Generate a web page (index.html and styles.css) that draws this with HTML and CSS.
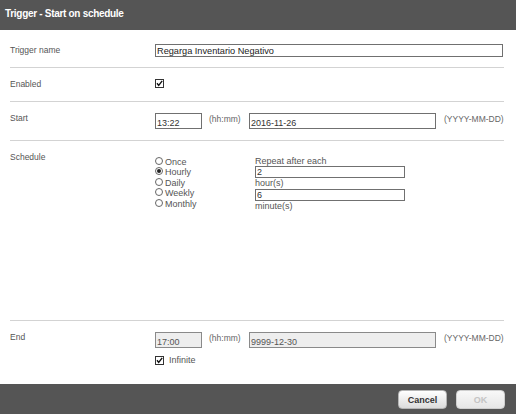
FILE: index.html
```html
<!DOCTYPE html>
<html>
<head>
<meta charset="utf-8">
<title>Trigger - Start on schedule</title>
<link rel="stylesheet" href="styles.css">
</head>
<body>
<div class="dialog">
  <div class="header">Trigger - Start on schedule</div>
  <div class="body">
    <div class="row row-name">
      <div class="label">Trigger name</div>
      <div class="content">
        <input class="field field-name" type="text" value="Regarga Inventario Negativo">
      </div>
    </div>
    <div class="row row-enabled">
      <div class="label">Enabled</div>
      <div class="content">
        <span class="check"><svg width="9" height="9" viewBox="0 0 9 9"><rect x="0.5" y="0.5" width="8" height="8" fill="#fff" stroke="#333"/><path d="M2 4.3 L3.7 6.4 L7.2 1.9" fill="none" stroke="#111" stroke-width="1.4"/></svg></span>
      </div>
    </div>
    <div class="row row-start">
      <div class="label">Start</div>
      <div class="content datetime">
        <input class="field field-dt" type="text" value="13:22">
        <span class="hint hint-time">(hh:mm)</span>
        <input class="field field-dt" type="text" value="2016-11-26">
        <span class="hint hint-date">(YYYY-MM-DD)</span>
      </div>
    </div>
    <div class="row row-schedule">
      <div class="label">Schedule</div>
      <div class="content schedule">
        <div class="radios">
          <div class="radio"><span class="dot"></span>Once</div>
          <div class="radio"><span class="dot on"></span>Hourly</div>
          <div class="radio"><span class="dot"></span>Daily</div>
          <div class="radio"><span class="dot"></span>Weekly</div>
          <div class="radio"><span class="dot"></span>Monthly</div>
        </div>
        <div class="repeat">
          <div class="rtext rtext-first">Repeat after each</div>
          <input class="field field-rep" type="text" value="2">
          <div class="rtext">hour(s)</div>
          <input class="field field-rep" type="text" value="6">
          <div class="rtext">minute(s)</div>
        </div>
      </div>
    </div>
    <div class="row row-end">
      <div class="label">End</div>
      <div class="content">
        <div class="datetime">
          <input class="field field-dt disabled" type="text" value="17:00">
          <span class="hint hint-time">(hh:mm)</span>
          <input class="field field-dt disabled" type="text" value="9999-12-30">
          <span class="hint hint-date">(YYYY-MM-DD)</span>
        </div>
        <div class="infinite">
          <span class="check"><svg width="9" height="9" viewBox="0 0 9 9"><rect x="0.5" y="0.5" width="8" height="8" fill="#fff" stroke="#333"/><path d="M2 4.3 L3.7 6.4 L7.2 1.9" fill="none" stroke="#111" stroke-width="1.4"/></svg></span>
          <span class="inf-text">Infinite</span>
        </div>
      </div>
    </div>
  </div>
  <div class="footer">
    <button class="btn btn-cancel">Cancel</button>
    <button class="btn btn-ok" disabled>OK</button>
  </div>
</div>
</body>
</html>
```
FILE: styles.css
```css
html, body {
  margin: 0;
  padding: 0;
  background: #fff;
}
body {
  font-family: "Liberation Sans", Arial, sans-serif;
  font-size: 9px;
  color: #555;
}
.dialog {
  width: 516px;
  height: 414px;
  display: flex;
  flex-direction: column;
  overflow: hidden;
}
.header {
  height: 30px;
  box-sizing: border-box;
  background: #555555;
  color: #fff;
  font-weight: bold;
  font-size: 10px;
  line-height: 28px;
  padding-left: 5px;
  letter-spacing: -0.3px;
}
.body {
  flex: 1;
  display: flex;
  flex-direction: column;
}
.row {
  display: flex;
  align-items: flex-start;
  box-sizing: border-box;
  margin: 0 12px 0 10px;
  border-bottom: 1px solid #d3d3d3;
}
.label {
  width: 145px;
  flex: none;
  line-height: 12px;
  font-size: 8.5px;
  color: #555;
}
.content {
  flex: 1;
}
.row-name { height: 38px; padding-top: 14px; }
.row-enabled { height: 34px; padding-top: 11px; }
.row-enabled .label { margin-top: -1px; }
.row-start { height: 39px; padding-top: 11px; }
.row-start .label { margin-top: -1px; }
.row-schedule { height: 180px; padding-top: 10px; }
.row-end { height: 63px; padding-top: 11px; border-bottom: none; }
.row-end .label { margin-top: -1px; }

.field {
  display: block;
  box-sizing: border-box;
  margin: 0;
  border: 1px solid #707070;
  border-radius: 0;
  background: #fff;
  font-family: "Liberation Sans", Arial, sans-serif;
  font-size: 9px;
  color: #333;
  padding: 0 1px;
  outline: none;
}
.field-name {
  width: 348px;
  height: 13px;
  line-height: 11px;
  font-size: 9.2px;
  color: #222;
}
.check {
  display: block;
  width: 9px;
  height: 9px;
}
.check svg { display: block; }

.datetime {
  display: grid;
  grid-template-columns: 47px 47px 187px auto;
  align-items: start;
}
.field-dt {
  width: 100%;
  height: 16px;
  padding-top: 3px;
  line-height: 11px;
}
.hint {
  font-size: 8.5px;
  color: #666;
  line-height: 10px;
  padding-top: 1px;
}
.hint-time { padding-left: 7px; }
.hint-date { padding-left: 8px; }
.disabled {
  background: #eeeeee;
  border-color: #8a8a8a;
  color: #555;
}

.schedule {
  display: flex;
}
.radios {
  width: 100px;
  margin-top: 5.5px;
}
.radio {
  display: flex;
  align-items: center;
  height: 10.5px;
  line-height: 10.5px;
  color: #555;
}
.dot {
  width: 8px;
  height: 8px;
  box-sizing: border-box;
  border: 1px solid #666;
  border-radius: 50%;
  background: #fff;
  margin-right: 2px;
  margin-top: -2px;
  position: relative;
}
.dot.on::after {
  content: "";
  position: absolute;
  left: 1px;
  top: 1px;
  width: 4px;
  height: 4px;
  border-radius: 50%;
  background: #222;
}
.repeat {
  width: 150px;
  margin-top: 5px;
}
.rtext {
  line-height: 11px;
  height: 11px;
  color: #555;
}
.rtext-first {
  height: 10px;
  line-height: 10px;
}
.field-rep {
  width: 150px;
  height: 12px;
  line-height: 10px;
}

.infinite {
  display: flex;
  align-items: center;
  margin-top: 8px;
}
.inf-text {
  margin-left: 5px;
  color: #555;
  line-height: 9px;
}

.footer {
  height: 30px;
  flex: none;
  background: #555555;
  display: flex;
  justify-content: flex-end;
  align-items: flex-start;
  gap: 9px;
  padding: 6px 11px 0 0;
  box-sizing: border-box;
}
.btn {
  width: 49px;
  height: 19px;
  box-sizing: border-box;
  border: 1px solid #b5b5b5;
  border-radius: 4px;
  background: linear-gradient(#ffffff, #dcdcdc);
  font-family: "Liberation Sans", Arial, sans-serif;
  font-size: 9px;
  font-weight: bold;
  padding: 0;
  color: #333;
}
.btn-ok {
  color: #c4c4c4;
  background: linear-gradient(#f8f8f8, #e6e6e6);
  border-color: #cfcfcf;
}
```
